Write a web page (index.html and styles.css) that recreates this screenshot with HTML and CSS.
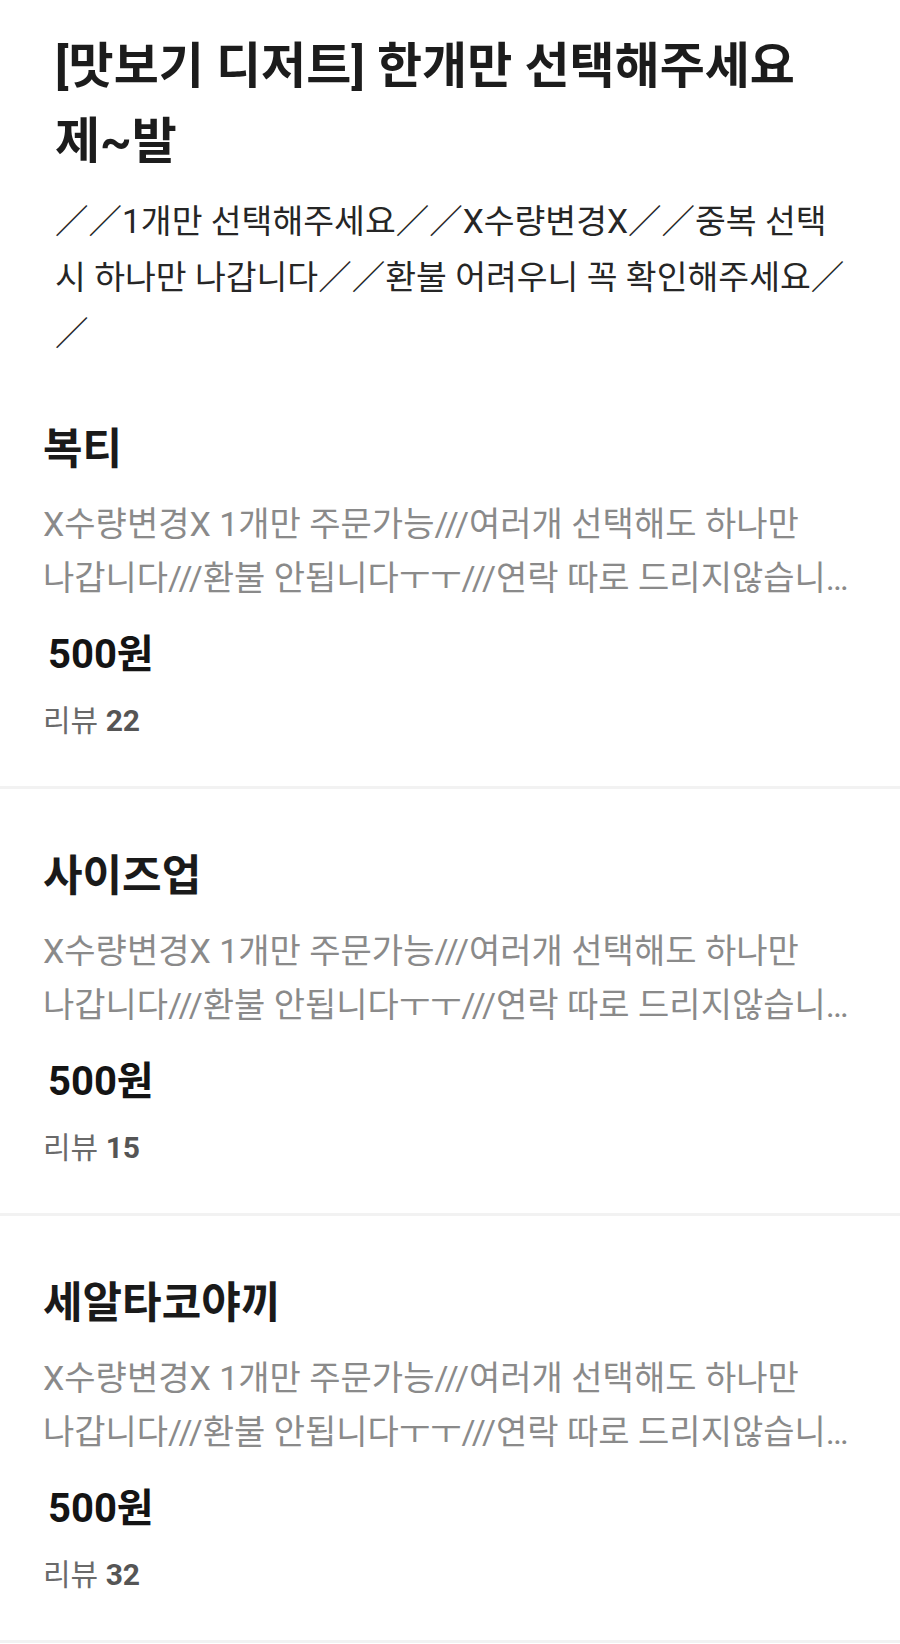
FILE: index.html
```html
<!DOCTYPE html>
<html lang="ko">
<head>
<meta charset="utf-8">
<title>맛보기 디저트</title>
<link rel="stylesheet" href="styles.css">
</head>
<body>
<main class="page">
  <header class="group-head">
    <h1 class="group-title">[맛보기 디저트] 한개만 선택해주세요 제~발</h1>
    <p class="group-desc">／／1개만 선택해주세요／／X수량변경X／／중복 선택 시 하나만 나갑니다／／환불 어려우니 꼭 확인해주세요／／</p>
  </header>
  <ul class="menu-list">
    <li class="menu-item">
      <h2 class="menu-name">복티</h2>
      <p class="menu-desc"><span class="desc-line">X수량변경X 1개만 주문가능///여러개 선택해도 하나만</span><span class="desc-line desc-rest">나갑니다///환불 안됩니다ㅜㅜ///연락 따로 드리지않습니다///꼭 확인해주세요</span></p>
      <p class="menu-price">500원</p>
      <p class="menu-review">리뷰 <b>22</b></p>
    </li>
    <li class="menu-item">
      <h2 class="menu-name">사이즈업</h2>
      <p class="menu-desc"><span class="desc-line">X수량변경X 1개만 주문가능///여러개 선택해도 하나만</span><span class="desc-line desc-rest">나갑니다///환불 안됩니다ㅜㅜ///연락 따로 드리지않습니다///꼭 확인해주세요</span></p>
      <p class="menu-price">500원</p>
      <p class="menu-review">리뷰 <b>15</b></p>
    </li>
    <li class="menu-item">
      <h2 class="menu-name">세알타코야끼</h2>
      <p class="menu-desc"><span class="desc-line">X수량변경X 1개만 주문가능///여러개 선택해도 하나만</span><span class="desc-line desc-rest">나갑니다///환불 안됩니다ㅜㅜ///연락 따로 드리지않습니다///꼭 확인해주세요</span></p>
      <p class="menu-price">500원</p>
      <p class="menu-review">리뷰 <b>32</b></p>
    </li>
  </ul>
</main>
</body>
</html>
```
FILE: styles.css
```css
* {
  box-sizing: border-box;
}

html, body {
  margin: 0;
  padding: 0;
  background: #ffffff;
}

body {
  font-family: Roboto, "Noto Sans CJK KR", sans-serif;
  color: #1a1a1a;
}

.page {
  width: 900px;
  padding-top: 29px;
}

.group-head {
  padding: 0 42px 0 55px;
}

.group-title {
  margin: 0 30px 0 0;
  font-size: 49px;
  line-height: 75px;
  font-weight: 700;
  color: #1c1c1c;
  word-break: keep-all;
}

.group-desc {
  margin: 15px 0 0;
  font-size: 33.5px;
  line-height: 56px;
  font-weight: 400;
  color: #262626;
}

.menu-list {
  list-style: none;
  margin: 0;
  padding: 0;
}

.menu-item {
  padding: 59px 43px 45px;
  border-bottom: 3px solid #f2f2f2;
}

.menu-name {
  margin: 0;
  font-size: 43px;
  line-height: 56px;
  font-weight: 700;
  color: #1a1a1a;
}

.menu-desc {
  margin: 20px 0 0;
  font-size: 34px;
  line-height: 54px;
  color: #8a8a8a;
}

.desc-line {
  display: block;
  white-space: nowrap;
  overflow: hidden;
}

.desc-rest {
  text-overflow: ellipsis;
}

.menu-price {
  margin: 25px 0 0;
  padding-left: 5px;
  font-size: 40px;
  line-height: 50px;
  font-weight: 700;
  color: #141414;
}

.menu-review {
  margin: 21px 0 0;
  font-size: 30px;
  line-height: 40px;
  color: #6a6a6a;
}

.menu-review b {
  font-weight: 700;
  color: #555555;
}
```
